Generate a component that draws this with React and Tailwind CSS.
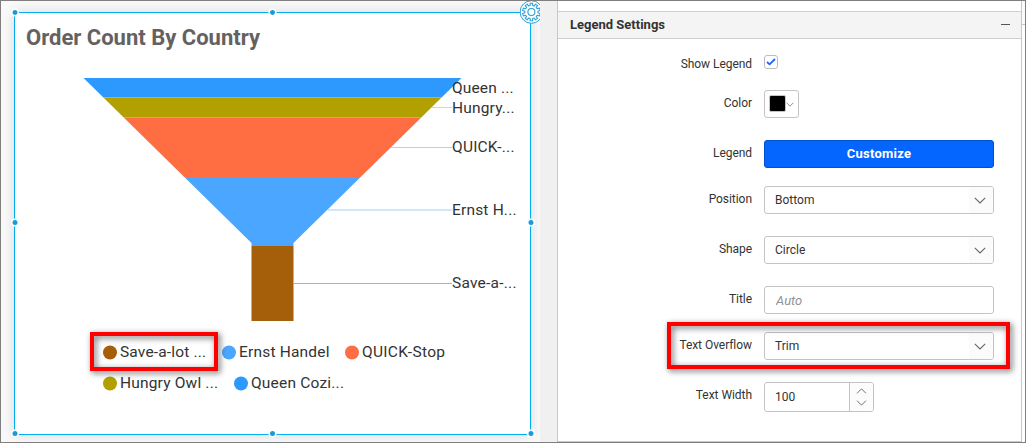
import React from "react";

const slices = [
  { color: "#2d99ff", points: "83.5,78 461.5,78 441.6,97.5 103.4,97.5" },
  { color: "#b1a000", points: "103.4,97.5 441.6,97.5 421.3,117.5 123.7,117.5" },
  { color: "#ff6e42", points: "123.7,117.5 421.3,117.5 360.7,177 184.3,177" },
  { color: "#4ba6ff", points: "184.3,177 360.7,177 293.5,243 293.5,246 251.5,246 251.5,243" },
  { color: "#a55e09", points: "251.5,246 293.5,246 293.5,321 251.5,321" },
];

const labels = [
  { text: "Queen ...", y: 88, width: 61.5 },
  { text: "Hungry...", y: 107.5, from: 431.5, color: "#e0d99a", width: 62.5 },
  { text: "QUICK-...", y: 147.5, base: 152, from: 391, color: "#f9bba8", width: 62.5 },
  { text: "Ernst H...", y: 210, from: 328, color: "#cfe6fd", thick: 2, width: 64.5 },
  { text: "Save-a-...", y: 283.5, base: 288, from: 293.5, color: "#d4a778", width: 64.5 },
];

const legendRows = [
  [
    { x: 110, color: "#a55e09", text: "Save-a-lot ...", width: 86 },
    { x: 229, color: "#4ba6ff", text: "Ernst Handel", width: 90.5 },
    { x: 352, color: "#ff6e42", text: "QUICK-Stop", width: 83 },
  ],
  [
    { x: 110, color: "#b1a000", text: "Hungry Owl ...", width: 98 },
    { x: 241, color: "#2d99ff", text: "Queen Cozi...", width: 93 },
  ],
];

const handles = [
  [15, 12.5], [272.5, 12.5], [15, 222.5], [531, 222.5],
  [15, 433.5], [272.5, 433.5], [531, 433.5],
];

function Gear() {
  const teeth = Array.from({ length: 10 }, (_, i) => {
    const at = (r, d) => {
      const a = ((i * 36 + 18 + d) * Math.PI) / 180;
      return `${(11.4 + r * Math.cos(a)).toFixed(2)},${(12 + r * Math.sin(a)).toFixed(2)}`;
    };
    return `${at(6.6, -11)} ${at(8.9, -8)} ${at(8.9, 8)} ${at(6.6, 11)}`;
  }).join(" ");
  return (
    <svg className="absolute left-[519px] -top-px h-6 w-[20px]" viewBox="0 0 20 24" fill="none" stroke="#2a9fd6">
      <circle cx="11.4" cy="12" r="11.3" fill="#fff" strokeWidth="1" />
      <polygon points={teeth} strokeWidth="1.1" strokeLinejoin="round" />
      <circle cx="11.4" cy="12" r="3.5" strokeWidth="1.1" />
    </svg>
  );
}

function FunnelChart() {
  return (
    <svg
      className="absolute -left-px -top-px h-[443px] w-[540px] font-['Roboto',sans-serif]"
      viewBox="0 0 540 443"
      fontSize="15.5"
      fill="#333"
    >
      {slices.map((s) => (
        <polygon key={s.color} points={s.points} fill={s.color} />
      ))}
      {labels.map((l) => (
        <g key={l.text}>
          {l.from && <path d={`M${l.from} ${l.y}H452`} stroke={l.color} strokeWidth={l.thick || 1} />}
          <text x="452" y={l.base || Math.round(l.y + 5)} textLength={l.width}>{l.text}</text>
        </g>
      ))}
      {legendRows.map((row, r) =>
        row.map((item) => (
          <g key={item.text}>
            <circle cx={item.x} cy={352.5 + r * 31} r="7" fill={item.color} />
            <text x={item.x + 10} y={357 + r * 31} textLength={item.width}>{item.text}</text>
          </g>
        ))
      )}
      {handles.map(([x, y]) => (
        <circle key={`${x}-${y}`} cx={x} cy={y} r="3.3" fill="#1a9bd7" stroke="#fff" strokeWidth="1.6" />
      ))}
    </svg>
  );
}

function Chevron({ className, up }) {
  return (
    <svg className={className} viewBox="0 0 12 7" fill="none" stroke="#666" strokeWidth="1.1">
      <path d={up ? "M.8 6.2 6 1l5.2 5.2" : "M.8.8 6 6 11.2.8"} />
    </svg>
  );
}

function Row({ label, className, labelClass = "-mt-0.5", children }) {
  return (
    <div className={`flex items-center gap-3 ${className}`}>
      <span className={`w-[194px] text-right text-[12px] leading-4 tracking-[-0.05px] whitespace-nowrap ${labelClass}`}>{label}</span>
      {children}
    </div>
  );
}

function Select({ value }) {
  return (
    <div className="flex h-7 w-[230px] items-center overflow-hidden rounded-[3px] border border-[#c4c4c4] bg-white pl-2.5 text-[12px]">
      <span className="grow">{value}</span>
      <span className="flex h-full w-6 items-center bg-[#fbfbfb] pl-[5px]">
        <Chevron className="mt-px h-[7px] w-3" />
      </span>
    </div>
  );
}

function SettingsPanel() {
  return (
    <section className="flex w-[465px] flex-col border-x border-b border-[#c8c8c8] bg-white text-[#333]">
      <header className="mt-[10px] flex h-7 shrink-0 items-center justify-between border-y border-[#cfcfcf] bg-[#f4f4f4] pr-[11px] pl-3">
        <h2 className="-mt-px text-[13px] font-bold">Legend Settings</h2>
        <span className="-mt-0.5 h-px w-[9px] bg-[#555]" />
      </header>
      <Row label="Show Legend" labelClass="mt-1" className="mt-4 h-[14px]">
        <span className="flex size-[14px] items-center justify-center rounded-[3px] border border-[#bdbdbd] bg-white">
          <svg className="h-2 w-[10px]" viewBox="0 0 10 8" fill="none" stroke="#1d63ff" strokeWidth="1.8">
            <path d="M1 4 3.6 6.3 9 1" />
          </svg>
        </span>
      </Row>
      <Row label="Color" className="mt-[21px] h-7">
        <span className="flex h-7 w-[35px] items-center rounded-[3px] border border-[#c4c4c4] pl-1">
          <span className="-mt-px size-[17px] shrink-0 rounded-[2px] border border-[#c4c4c4] bg-black" />
          <Chevron className="mt-px h-[5px] w-2" />
        </span>
      </Row>
      <Row label="Legend" className="mt-[22px] h-7">
        <button className="h-7 w-[230px] rounded-[3px] border border-[#0050d0] bg-[#0565ff] text-[13px] font-bold tracking-[0.25px] text-white">
          Customize
        </button>
      </Row>
      <Row label="Position" className="mt-[18px] h-7"><Select value="Bottom" /></Row>
      <Row label="Shape" className="mt-[22px] h-7"><Select value="Circle" /></Row>
      <Row label="Title" className="mt-[22px] h-7">
        <input
          className="h-7 w-[230px] rounded-[3px] border border-[#c4c4c4] px-[11px] text-[13px] italic placeholder:text-[#929292]"
          placeholder="Auto"
        />
      </Row>
      <Row label="Text Overflow" className="mt-[18px] h-7"><Select value="Trim" /></Row>
      <Row label="Text Width" labelClass="-mt-1" className="mt-[22px] h-[30px]">
        <div className="flex h-[30px] w-[110px] overflow-hidden rounded-[3px] border border-[#c4c4c4] text-[12px]">
          <span className="flex grow items-center pl-2.5">100</span>
          <span className="flex w-6 flex-col items-center justify-center gap-1.5 border-l border-[#c4c4c4] bg-[#fcfcfc]">
            <Chevron up className="h-[6px] w-[11px]" />
            <Chevron className="h-[6px] w-[11px]" />
          </span>
        </div>
      </Row>
    </section>
  );
}

export default function App() {
  return (
    <main className="relative flex h-[443px] w-[1026px] overflow-hidden border border-[#7f7f7f] bg-[#fafafa] font-['Roboto',sans-serif]">
      <section className="relative w-[539px] overflow-hidden bg-[#f9f9f9] pt-[11px] pl-[13px]">
        <article className="h-[423px] w-[517px] border border-[#00adef] bg-white px-[11px] pt-[10px] shadow-[0_0_12px_rgba(0,0,0,0.13)]">
          <h1 className="text-[22px] leading-[30px] font-bold whitespace-nowrap text-[#656161]">Order Count By Country</h1>
        </article>
        <FunnelChart />
        <Gear />
      </section>
      <div className="w-[17px] bg-[#f0f0f0]" />
      <SettingsPanel />
      <aside className="flex w-[3px] flex-col bg-white">
        <div className="h-[24px] border-b border-[#c8c8c8] bg-[#fbfbfb]" />
      </aside>
      <div className="absolute top-[331px] left-[89px] h-[39px] w-32 border-4 border-[#fe0000] drop-shadow-[2px_2px_3px_rgba(0,0,0,0.6)]" />
      <div className="absolute top-[321px] left-[666px] h-[47px] w-[343px] border-4 border-[#fe0000] drop-shadow-[2px_2px_3px_rgba(0,0,0,0.6)]" />
    </main>
  );
}
